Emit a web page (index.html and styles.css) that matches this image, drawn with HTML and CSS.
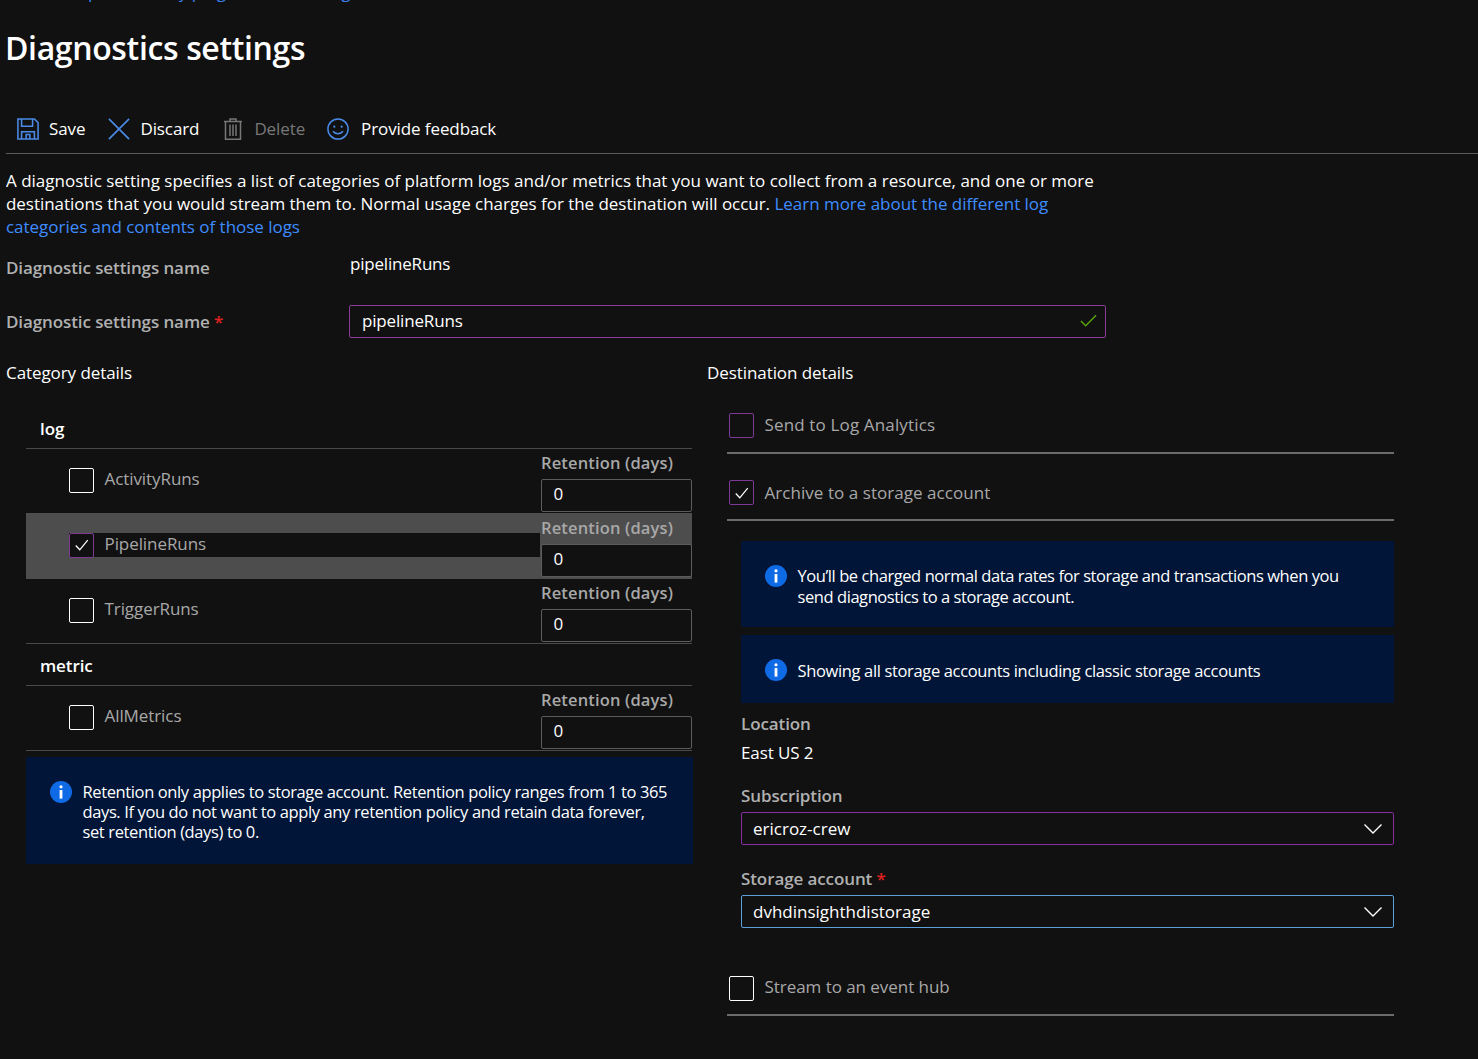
FILE: index.html
```html
<!DOCTYPE html>
<html lang="en">
<head>
<meta charset="utf-8">
<title>Diagnostics settings</title>
<link rel="stylesheet" href="styles.css">
</head>
<body>
<svg class="defs" width="0" height="0" aria-hidden="true">
  <symbol id="tick" viewBox="0 0 24 24"><path d="M6 12.500l4.200 4.500L18.500 7" fill="none" stroke="#fff" stroke-width="1.300"/></symbol>
  <symbol id="info" viewBox="0 0 22 22"><circle cx="11" cy="11" r="11" fill="#0f6ae6"/><circle cx="11" cy="5.800" r="1.600" fill="#fff"/><rect x="9.600" y="9" width="2.800" height="8.600" fill="#fff"/></symbol>
  <symbol id="chev" viewBox="0 0 20 12"><path d="M1.500 1.500L10 10l8.500-8.500" fill="none" stroke="#fff" stroke-width="1.400"/></symbol>
</svg>
<div class="crumb">Monitor &gt; pools for my plugin and more logs</div>
<h1 class="title">Diagnostics settings</h1>
<nav class="toolbar">
  <span class="tool tool-save">
    <svg class="ico" viewBox="0 0 24 24"><path d="M1 1h18l4 4v18H1z M5 1v8h12V1 M5 23v-8h14v8 M10 23v-5h4v5" fill="none" stroke="#4a8be8" stroke-width="1.700"/></svg>
    <span>Save</span>
  </span>
  <span class="tool tool-discard">
    <svg class="ico" viewBox="0 0 24 24"><path d="M1 1l22 22M23 1L1 23" fill="none" stroke="#4a8be8" stroke-width="1.800"/></svg>
    <span>Discard</span>
  </span>
  <span class="tool tool-delete">
    <svg class="ico ico-del" viewBox="0 0 18 22"><path d="M0 3.500h18M6 3.500V1h6v2.500M1.500 3.500V21.200h15V3.500M6 6.500v11.500M9 6.500v11.500M12 6.500v11.500" fill="none" stroke="#777" stroke-width="1.500"/></svg>
    <span>Delete</span>
  </span>
  <span class="tool tool-feedback">
    <svg class="ico" viewBox="0 0 24 24"><circle cx="12" cy="12" r="11" fill="none" stroke="#4a8be8" stroke-width="1.600"/><circle cx="8" cy="9.500" r="1.200" fill="#4a8be8"/><circle cx="16" cy="9.500" r="1.200" fill="#4a8be8"/><path d="M6.500 14.500c2.700 3.500 8.300 3.500 11 0" fill="none" stroke="#4a8be8" stroke-width="1.600"/></svg>
    <span>Provide feedback</span>
  </span>
</nav>
<p class="intro">A diagnostic setting specifies a list of categories of platform logs and/or metrics that you want to collect from a resource, and one or more <span class="intro-tight">destinations that you would stream them to. Normal usage charges for the destination will occur.</span> <a class="link">Learn more about the different log categories and contents of those logs</a></p>
<div class="name-row">
  <div class="field-label">Diagnostic settings name</div>
  <div class="name-value">pipelineRuns</div>
</div>
<div class="name-row name-row-input">
  <div class="field-label">Diagnostic settings name <span class="req">*</span></div>
  <div class="name-input"><span>pipelineRuns</span>
    <svg class="ok" viewBox="0 0 18 14"><path d="M1 7l5 5L17 1" fill="none" stroke="#5aa50e" stroke-width="1.500"/></svg>
  </div>
</div>
<div class="columns">
  <section class="col-left">
    <h2 class="col-title">Category details</h2>
    <div class="group-title group-log">log</div>
    <div class="cat">
      <div class="cat-name"><span class="box"></span><span class="cat-label">ActivityRuns</span></div>
      <div class="ret"><div class="ret-label">Retention (days)</div><div class="ret-input">0</div></div>
    </div>
    <div class="cat cat-active">
      <div class="cat-name"><span class="box box-focus"><svg class="tick"><use href="#tick"/></svg></span><span class="cat-label">PipelineRuns</span></div>
      <div class="ret"><div class="ret-label">Retention (days)</div><div class="ret-input">0</div></div>
    </div>
    <div class="cat cat-last">
      <div class="cat-name"><span class="box"></span><span class="cat-label">TriggerRuns</span></div>
      <div class="ret"><div class="ret-label">Retention (days)</div><div class="ret-input">0</div></div>
    </div>
    <div class="group-title group-metric">metric</div>
    <div class="cat cat-last">
      <div class="cat-name"><span class="box"></span><span class="cat-label">AllMetrics</span></div>
      <div class="ret"><div class="ret-label">Retention (days)</div><div class="ret-input">0</div></div>
    </div>
    <div class="notice notice-ret">
      <svg class="info"><use href="#info"/></svg>
      <p>Retention only applies to storage account. Retention policy ranges from 1 to 365 days. If you do not want to apply any retention policy and retain data forever, set retention (days) to 0.</p>
    </div>
  </section>
  <section class="col-right">
    <h2 class="col-title">Destination details</h2>
    <div class="dest dest-la"><span class="box box-focus"></span><span class="cat-label">Send to Log Analytics</span></div>
    <div class="dest dest-arch"><span class="box box-focus"><svg class="tick"><use href="#tick"/></svg></span><span class="cat-label">Archive to a storage account</span></div>
    <div class="storage">
      <div class="notice notice-a">
        <svg class="info"><use href="#info"/></svg>
        <p>You’ll be charged normal data rates for storage and transactions when you send diagnostics to a storage account.</p>
      </div>
      <div class="notice notice-b">
        <svg class="info"><use href="#info"/></svg>
        <p>Showing all storage accounts including classic storage accounts</p>
      </div>
      <div class="field-label loc-label">Location</div>
      <div class="loc-value">East US 2</div>
      <div class="field-label sub-label">Subscription</div>
      <div class="select select-sub"><span>ericroz-crew</span><svg class="chev"><use href="#chev"/></svg></div>
      <div class="field-label acc-label">Storage account <span class="req">*</span></div>
      <div class="select select-acc"><span>dvhdinsighthdistorage</span><svg class="chev"><use href="#chev"/></svg></div>
    </div>
    <div class="dest dest-hub"><span class="box"></span><span class="cat-label">Stream to an event hub</span></div>
  </section>
</div>
</body>
</html>
```
FILE: styles.css
```css
* { box-sizing: border-box; }
html, body { height: 100%; }
body {
  margin: 0;
  background: #111;
  color: #fff;
  font-family: "Open Sans", "Noto Sans", "Liberation Sans", sans-serif;
  font-size: 17px;
  overflow: hidden;
}
.defs { display: block; height: 0; }
.crumb { height: 24px; margin-top: -20px; padding-left: 6px; color: #3b82f0; line-height: 24px; white-space: nowrap; }
.title { margin: 21px 0 0 5px; height: 46px; font-size: 32px; line-height: 46px; font-weight: 600; letter-spacing: -0.36px; }
.toolbar { display: flex; align-items: center; height: 45px; margin: 38px 0 0 6px; padding: 0 0 4px 11px; border-bottom: 1px solid #5a5a5a; }
.tool { display: flex; align-items: center; }
.tool span { line-height: 24px; letter-spacing: -0.1px; }
.ico { width: 22px; height: 22px; margin-right: 10px; }
.ico-del { width: 18px; margin-right: 12px; }
.tool-discard { margin-left: 23px; }
.tool-delete { margin-left: 25px; color: #777; }
.tool-feedback { margin-left: 22px; }
.tool-feedback .ico { margin-right: 12px; }
.intro { margin: 0 0 0 6px; padding-top: 15px; width: 1100px; line-height: 23px; letter-spacing: 0; }
.intro-tight { letter-spacing: -0.04px; }
.link { color: #3f8cff; letter-spacing: -0.03px; }
.name-row { display: flex; align-items: center; margin-left: 6px; height: 36px; margin-top: 12px; }
.name-row-input { margin-top: 19px; height: 33px; }
.field-label { color: #b0b0b0; font-weight: 600; line-height: 24px; letter-spacing: -0.1px; }
.name-row .field-label { width: 343px; }
.name-value { margin: -10px 0 0 1px; letter-spacing: -0.2px; }
.req { color: #e02020; }
.name-input { display: flex; align-items: center; justify-content: space-between; width: 757px; height: 33px; border: 1px solid #8a3c98; border-radius: 2px; padding: 0 8px 2px 12px; letter-spacing: -0.17px; }
.ok { width: 17px; height: 14px; }
.columns { display: grid; grid-template-columns: 701px 1fr; margin: 23px 0 0 6px; }
.col-title { margin: 0; font-size: 17px; font-weight: 400; line-height: 24px; letter-spacing: -0.08px; height: 24px; }
.col-left { display: flex; flex-direction: column; }
.group-title { margin-left: 20px; width: 666px; padding-left: 14px; font-weight: 600; line-height: 24px; letter-spacing: -0.1px; border-bottom: 1px solid #4a4a4a; }
.group-log { margin-top: 32px; height: 32px; }
.group-metric { margin-top: 10px; height: 32px; }
.cat { display: flex; justify-content: space-between; margin-left: 20px; width: 666px; height: 65px; padding-top: 2px; align-items: flex-start; }
.cat-last { border-bottom: 1px solid #4a4a4a; }
.cat-active { background: #4d4d4d; margin-top: -1px; height: 66px; padding-top: 3px; }
.cat-name { display: flex; align-items: center; margin-top: 17px; height: 24px; padding-left: 43px; flex: 1; }
.cat-name .cat-label { margin-bottom: 2px; letter-spacing: -0.08px; }
.cat-active .cat-name { background: #111; margin-left: 43px; padding-left: 0; margin-right: 1px; }
.box { display: flex; align-items: center; justify-content: center; width: 25px; height: 25px; flex: none; border: 1px solid #fff; border-radius: 2px; margin-right: 10.5px; }
.box-focus { border-color: #7c3a96; }
.tick { width: 24px; height: 24px; }
.cat-label { color: #a8a8a8; line-height: 24px; }
.ret { width: 151px; flex: none; }
.ret-label { color: #a8a8a8; font-weight: 600; font-size: 16.5px; line-height: 24px; height: 28px; letter-spacing: 0.15px; }
.ret-input { height: 33px; border: 1px solid #5c5c5c; border-radius: 2px; padding-left: 11.5px; line-height: 28px; background: #111; }
.notice { display: flex; background: #001537; }
.notice p { margin: 0; font-size: 16.5px; line-height: 20px; letter-spacing: -0.38px; }
.info { width: 22px; height: 22px; flex: none; margin-right: 10.5px; }
.notice-ret { margin: 6px 0 0 20px; width: 667px; height: 107px; padding: 24px 24px 0 24px; }
.notice-ret p { padding-top: 1px; }
.col-right { display: flex; flex-direction: column; }
.dest { display: flex; align-items: center; margin-left: 20px; width: 667px; border-bottom: 2px solid #6b6b6b; padding-left: 2px; }
.dest .box { margin-right: 10.5px; }
.dest .cat-label { letter-spacing: 0.05px; }
.dest-la { margin-top: 15px; height: 54px; padding-bottom: 2px; }
.dest-la .cat-label { letter-spacing: 0.15px; }
.dest-arch { height: 67px; padding-top: 12px; }
.storage { margin-left: 34px; width: 653px; margin-top: 20px; display: flex; flex-direction: column; }
.notice-a { height: 86px; padding: 24px 24px 0 24px; }
.notice-a p { line-height: 21px; letter-spacing: -0.43px; }
.notice-b { height: 68px; padding: 24px 24px 0 24px; margin-top: 8px; }
.notice-b p { letter-spacing: -0.35px; padding-top: 2px; }
.loc-label { margin-top: 9px; }
.loc-value { margin-top: 5px; line-height: 24px; letter-spacing: -0.1px; }
.sub-label { margin-top: 19px; }
.acc-label { margin-top: 22px; }
.select { display: flex; align-items: center; justify-content: space-between; height: 33px; border: 1px solid #8a2aa0; border-radius: 2px; padding: 0 10px 0 11px; letter-spacing: 0; margin-top: 4px; }
.select-acc { border-color: #5da0dc; }
.chev { width: 20px; height: 12px; }
.dest-hub { margin-top: 46px; height: 42px; padding-bottom: 14px; }
.dest-hub .box { margin-top: 2px; }
.dest-hub .cat-label { letter-spacing: -0.05px; }
```
